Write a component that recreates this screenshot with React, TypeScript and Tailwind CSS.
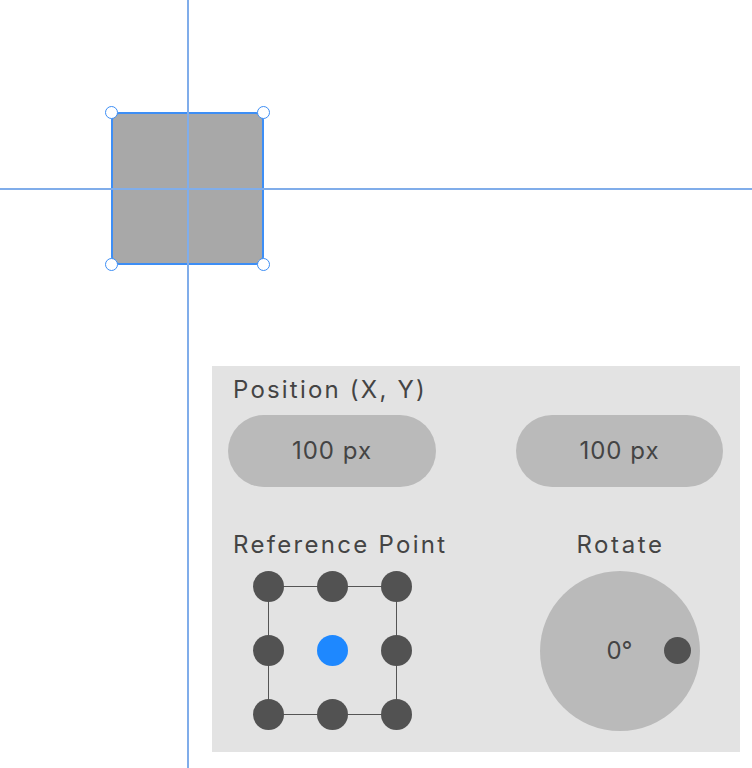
import React from 'react';

const font = { fontFamily: 'Inter, "Liberation Sans", sans-serif' };

// Corner handle on the selected shape
const Handle = ({ className }: { className: string }) => (
  <div
    className={`absolute w-[13px] h-[13px] rounded-full bg-white border-[1.5px] border-[#3d8ef5] ${className}`}
  />
);

const RefDot = ({ active }: { active?: boolean }) => (
  <div className="flex items-center justify-center">
    <div
      className={`w-[31px] h-[31px] rounded-full ${active ? 'bg-[#1e88ff]' : 'bg-[#525252]'}`}
    />
  </div>
);

const App = () => {
  const dots = [0, 1, 2, 3, 4, 5, 6, 7, 8];

  return (
    <div className="relative w-[752px] h-[768px] bg-white overflow-hidden text-[#444]" style={font}>
      {/* Canvas: selected shape */}
      <div className="absolute left-[111px] top-[112px] w-[153px] h-[153px] rounded-[8px] bg-[#a8a8a8] border-2 border-[#3d8ef5]" />
      {/* Guides */}
      <div className="absolute left-[187px] top-0 w-[2px] h-[768px] bg-[#80adea]" />
      <div className="absolute left-0 top-[188px] w-[752px] h-[2px] bg-[#80adea]" />
      <Handle className="left-[105px] top-[106px]" />
      <Handle className="left-[257px] top-[106px]" />
      <Handle className="left-[105px] top-[258px]" />
      <Handle className="left-[257px] top-[258px]" />

      {/* Inspector panel */}
      <div className="relative ml-[212px] mt-[366px] w-[528px] h-[386px] bg-[#e3e3e3] pt-[10px] pl-[16px] pr-[17px]">
        <div className="pl-[5px] text-[24px] leading-[28px] tracking-[2.2px]">Position (X, Y)</div>
        <div className="mt-[11px] flex justify-between">
          <div className="w-[208px] h-[72px] rounded-full bg-[#bababa] flex items-center justify-center text-[24px] tracking-[1px]">
            100 px
          </div>
          <div className="w-[207px] h-[72px] rounded-full bg-[#bababa] flex items-center justify-center text-[24px] tracking-[1px]">
            100 px
          </div>
        </div>

        <div className="mt-[44px] flex justify-between">
          <div className="w-[208px] flex flex-col">
            <div className="pl-[5px] text-[24px] leading-[28px] tracking-[2.3px] whitespace-nowrap">Reference Point</div>
            <div className="mt-[12px] self-center relative w-[159px] h-[159px]">
              <div className="absolute left-[15px] top-[15px] w-[129px] h-[129px] border border-[#555]" />
              <div className="relative grid grid-cols-3 grid-rows-3 w-[159px] h-[159px] gap-[33px]">
                {dots.map((i) => (
                  <RefDot key={i} active={i === 4} />
                ))}
              </div>
            </div>
          </div>
          <div className="w-[207px] flex flex-col items-center">
            <div className="pl-[2px] text-[24px] leading-[28px] tracking-[2.6px]">Rotate</div>
            <div className="mt-[12px] relative w-[160px] h-[160px] rounded-full bg-[#bababa] flex items-center justify-center">
              <span className="text-[24px]">0°</span>
              <div className="absolute left-[124px] top-[66px] w-[27px] h-[27px] rounded-full bg-[#525252]" />
            </div>
          </div>
        </div>
      </div>
    </div>
  );
};

export default App;
